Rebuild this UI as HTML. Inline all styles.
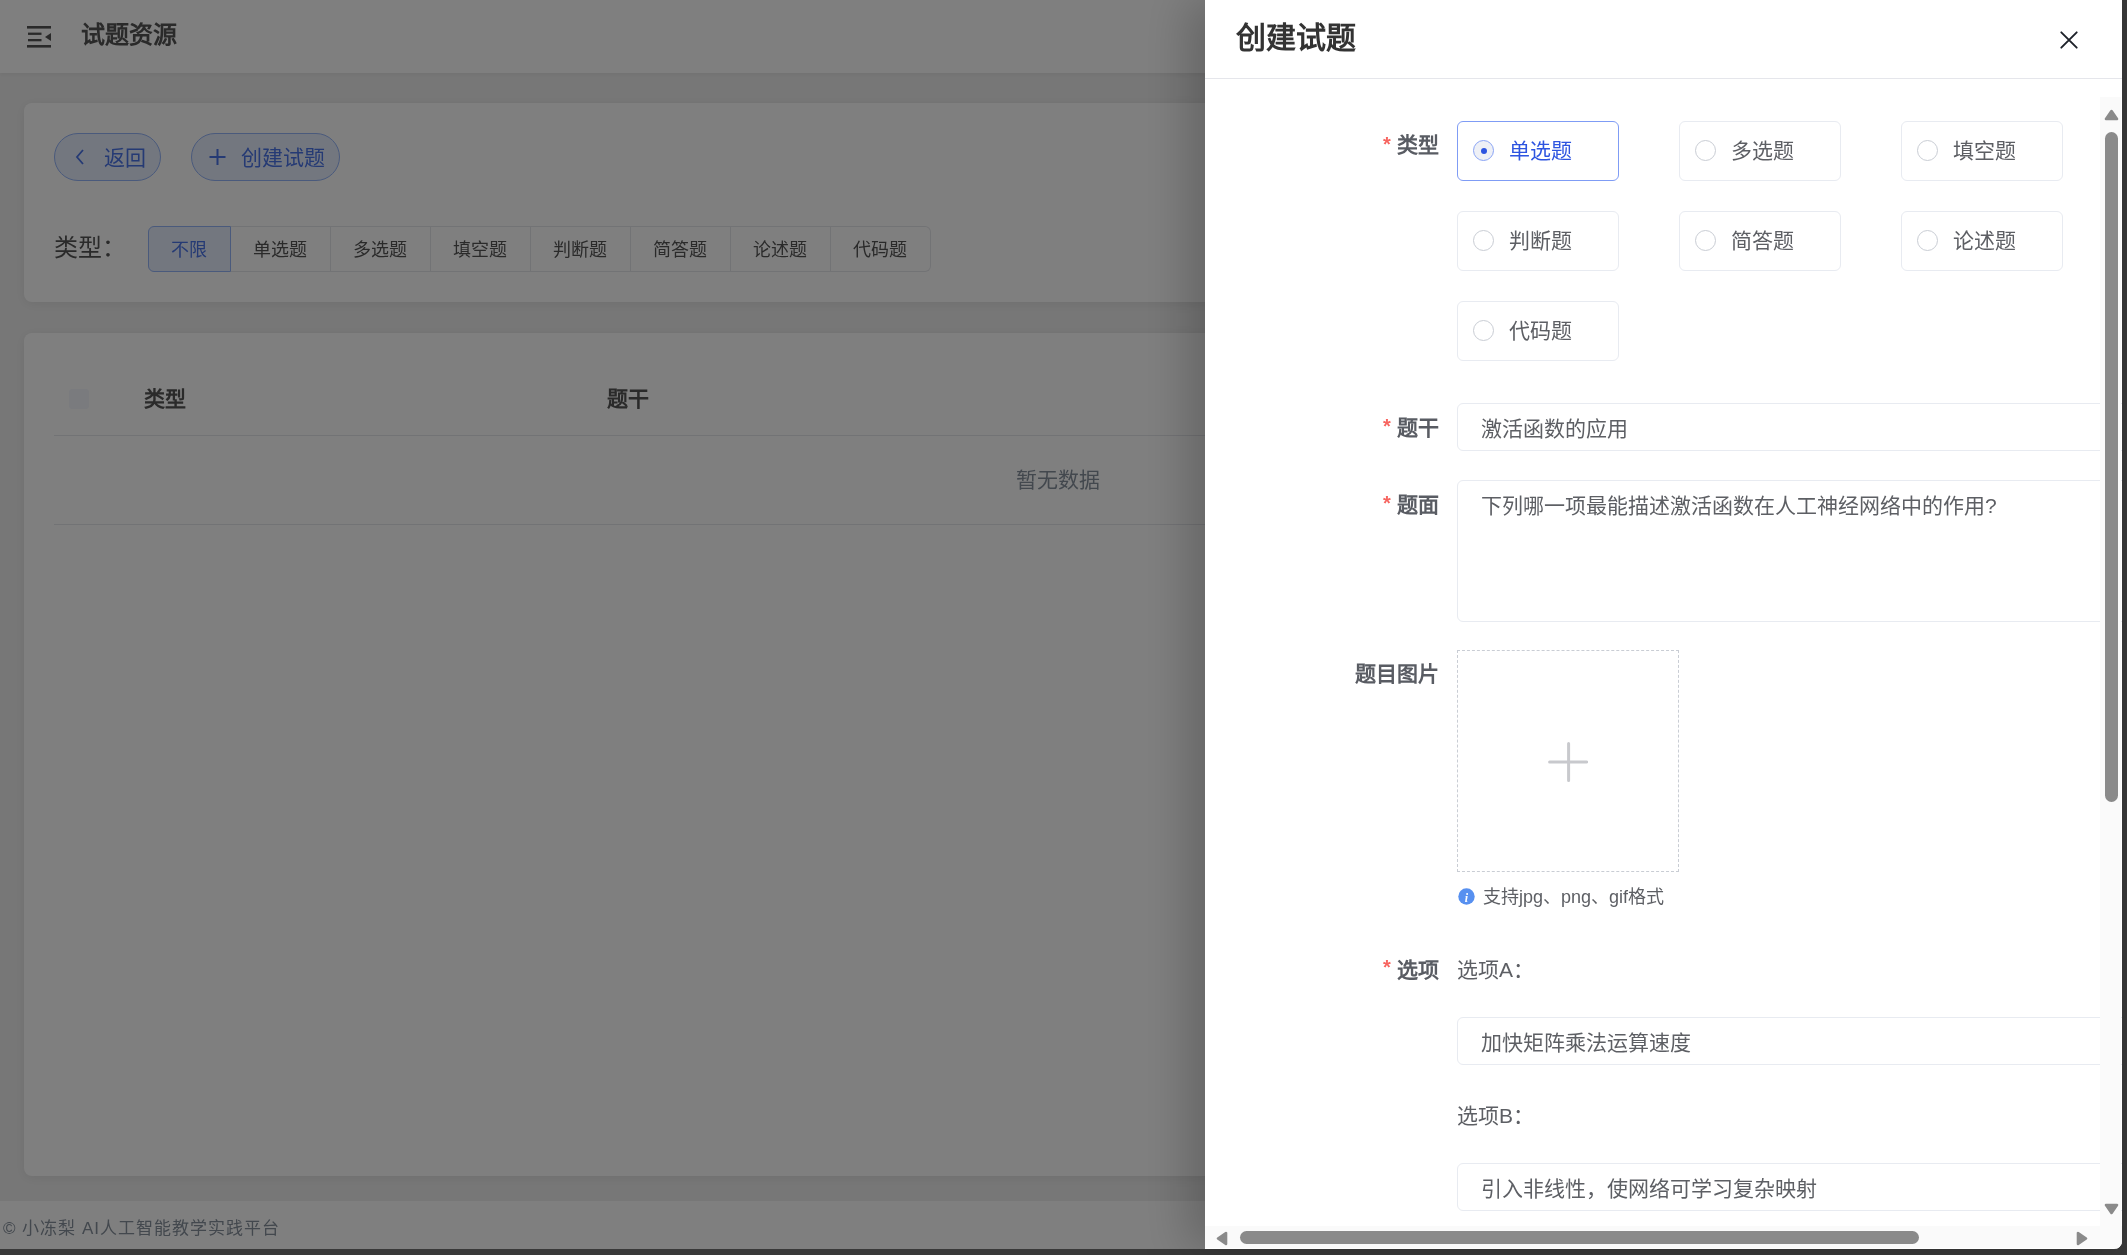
<!DOCTYPE html>
<html lang="zh-CN"><head><meta charset="utf-8">
<style>
*{box-sizing:border-box;margin:0;padding:0}
html,body{width:2127px;height:1255px;overflow:hidden;background:#393939;font-family:"Liberation Sans",sans-serif}
.abs{position:absolute}
#page{position:absolute;left:0;top:0;width:2122px;height:1249px;border-bottom-right-radius:8px;background:#efefef;overflow:hidden}
#hdr{left:0;top:0;width:2127px;height:73px;background:#fff;box-shadow:0 2px 4px rgba(0,0,0,.05)}
.card{background:#fff;border-radius:8px;box-shadow:0 2px 12px rgba(0,0,0,.07)}
.t{position:absolute;white-space:nowrap}
#mask{position:absolute;left:0;top:0;width:2122px;height:1249px;border-bottom-right-radius:8px;background:rgba(0,0,0,.5)}
#drawer{position:absolute;left:1205px;top:0;width:917px;height:1249px;background:#fff;border-bottom-right-radius:8px;box-shadow:-16px 0 48px rgba(0,0,0,.22);overflow:hidden}
.btn{position:absolute;height:48px;border-radius:24px;border:1px solid #94b4f8;background:#e6eeff}
.seg{position:absolute;top:226px;height:46px;border:1px solid #e5e6eb;border-left:none;width:100px}
.segt{font-size:18px;line-height:18px;color:#555;top:241px}
.lbl{font-weight:700;font-size:21px;line-height:21px;color:#595c63}
.req{color:#f76560;font-size:20px;line-height:20px;font-weight:700}
.rc{position:absolute;width:162px;height:60px;border:1px solid #e8ebf1;border-radius:6px}
.rc .ci{position:absolute;left:15px;top:18px;width:21px;height:21px;border-radius:50%;border:1px solid #c9cdd4;background:#fff}
.rc .tx{position:absolute;left:51px;top:18px;font-size:21px;line-height:21px;color:#5d5f64;white-space:nowrap}
.inp{position:absolute;left:252px;width:700px;border:1px solid #e8ebf1;border-radius:6px;background:#fff}
.it{font-size:21px;line-height:21px;color:#5d5f64}
.t,.rc .tx{will-change:opacity;opacity:0.999}
</style></head><body>
<div id="page">
  <div id="hdr" class="abs"></div>
  <!-- hamburger -->
  <svg class="abs" style="left:27px;top:26px" width="25" height="22" viewBox="0 0 25 22">
    <rect x="0" y="0" width="24" height="2.6" fill="#555"/>
    <rect x="1" y="6.6" width="13.5" height="2.3" fill="#555"/>
    <rect x="1" y="13" width="13.5" height="2.3" fill="#555"/>
    <rect x="0" y="19" width="24" height="2.6" fill="#555"/>
    <path d="M24 7 L18 11 L24 15 Z" fill="#555"/>
  </svg>
  <div class="t" style="left:81px;top:23px;font-weight:700;font-size:24px;line-height:24px;color:#555">试题资源</div>

  <div class="abs card" style="left:24px;top:103px;width:2079px;height:199px"></div>
  <div class="btn" style="left:54px;top:133px;width:107px"></div>
  <svg class="abs" style="left:74px;top:148px" width="12" height="18" viewBox="0 0 12 18"><path d="M9 2 L3 9 L9 16" fill="none" stroke="#4a74e8" stroke-width="1.8"/></svg>
  <div class="t" style="left:104px;top:147px;font-size:21px;line-height:21px;color:#4a74e8">返回</div>
  <div class="btn" style="left:191px;top:133px;width:149px"></div>
  <svg class="abs" style="left:208px;top:148px" width="19" height="18" viewBox="0 0 19 18"><path d="M9.5 1 V17 M1.5 9 H17.5" fill="none" stroke="#4a74e8" stroke-width="2"/></svg>
  <div class="t" style="left:241px;top:147px;font-size:21px;line-height:21px;color:#4a74e8">创建试题</div>

  <div class="t" style="left:54px;top:236px;font-size:24px;line-height:24px;color:#555">类型：</div>
  <div class="abs" style="left:148px;top:226px;width:83px;height:46px;border:1px solid #94b4f8;background:#e6eeff;border-radius:6px 0 0 6px"></div>
  <div class="seg" style="left:231px"></div>
  <div class="seg" style="left:331px"></div>
  <div class="seg" style="left:431px"></div>
  <div class="seg" style="left:531px"></div>
  <div class="seg" style="left:631px"></div>
  <div class="seg" style="left:731px"></div>
  <div class="seg" style="left:831px;border-radius:0 6px 6px 0"></div>
  <div class="t segt" style="left:171px;color:#4a74e8">不限</div>
  <div class="t segt" style="left:253px">单选题</div>
  <div class="t segt" style="left:353px">多选题</div>
  <div class="t segt" style="left:453px">填空题</div>
  <div class="t segt" style="left:553px">判断题</div>
  <div class="t segt" style="left:653px">简答题</div>
  <div class="t segt" style="left:753px">论述题</div>
  <div class="t segt" style="left:853px">代码题</div>

  <div class="abs card" style="left:24px;top:333px;width:2079px;height:843px"></div>
  <div class="abs" style="left:69px;top:389px;width:20px;height:20px;border-radius:3px;background:#f4f7fd"></div>
  <div class="t" style="left:144px;top:388px;font-weight:700;font-size:21px;line-height:21px;color:#555">类型</div>
  <div class="t" style="left:607px;top:388px;font-weight:700;font-size:21px;line-height:21px;color:#555">题干</div>
  <div class="abs" style="left:54px;top:435px;width:2049px;height:1px;background:#e5e6eb"></div>
  <div class="t" style="left:1016px;top:469px;font-size:21px;line-height:21px;color:#86909c">暂无数据</div>
  <div class="abs" style="left:54px;top:524px;width:2049px;height:1px;background:#e5e6eb"></div>

  <div class="abs" style="left:0;top:1201px;width:2127px;height:48px;background:#fff"></div>
  <div class="t" style="left:3px;top:1220px;font-size:17px;line-height:17px;letter-spacing:1px;color:#86909c">© 小冻梨 AI人工智能教学实践平台</div>
</div>
<div id="mask"></div>
<div id="drawer">
  <div class="t" style="left:31px;top:23px;font-weight:700;font-size:30px;line-height:30px;color:#333">创建试题</div>
  <svg class="abs" style="left:854px;top:30px" width="20" height="20" viewBox="0 0 20 20"><path d="M2.3 2.3 L17.7 17.7 M17.7 2.3 L2.3 17.7" stroke="#1d2129" stroke-width="1.9" stroke-linecap="round" fill="none"/></svg>
  <div class="abs" style="left:0;top:78px;width:917px;height:1px;background:#e5e6eb"></div>

  <!-- form -->
  <div class="t req" style="left:178px;top:134px">*</div>
  <div class="t lbl" style="left:192px;top:134px">类型</div>
  <div class="rc" style="left:252px;top:121px;border-color:#7f9cf5">
    <div class="ci" style="background:#eef0f6;border-color:#8aa4f5"></div>
    <div class="abs" style="left:23px;top:26px;width:6px;height:6px;border-radius:50%;background:#2d54e0"></div>
    <div class="tx" style="color:#2d54e0">单选题</div>
  </div>
  <div class="rc" style="left:474px;top:121px"><div class="ci"></div><div class="tx">多选题</div></div>
  <div class="rc" style="left:696px;top:121px"><div class="ci"></div><div class="tx">填空题</div></div>
  <div class="rc" style="left:252px;top:211px"><div class="ci"></div><div class="tx">判断题</div></div>
  <div class="rc" style="left:474px;top:211px"><div class="ci"></div><div class="tx">简答题</div></div>
  <div class="rc" style="left:696px;top:211px"><div class="ci"></div><div class="tx">论述题</div></div>
  <div class="rc" style="left:252px;top:301px"><div class="ci"></div><div class="tx">代码题</div></div>

  <div class="t req" style="left:178px;top:416px">*</div>
  <div class="t lbl" style="left:192px;top:417px">题干</div>
  <div class="inp" style="top:403px;height:48px"></div>
  <div class="t it" style="left:276px;top:418px">激活函数的应用</div>

  <div class="t req" style="left:178px;top:493px">*</div>
  <div class="t lbl" style="left:192px;top:494px">题面</div>
  <div class="inp" style="top:480px;height:142px"></div>
  <div class="t it" style="left:276px;top:495px">下列哪一项最能描述激活函数在人工神经网络中的作用?</div>

  <div class="t lbl" style="left:150px;top:663px">题目图片</div>
  <div class="abs" style="left:252px;top:650px;width:222px;height:222px;border:1px dashed #c9cdd4;background:#fff"></div>
  <svg class="abs" style="left:343px;top:742px" width="40" height="40" viewBox="0 0 40 40"><path d="M20.6 1.6 V38.4 M1.6 20 H38.6" stroke="#c8c9cd" stroke-width="3" stroke-linecap="round" fill="none"/></svg>
  <svg class="abs" style="left:253px;top:888px" width="17" height="17" viewBox="0 0 17 17"><circle cx="8.5" cy="8.5" r="8.2" fill="#5790f0"/><text x="8.5" y="13.5" text-anchor="middle" font-family="Liberation Serif" font-style="italic" font-weight="700" font-size="12" fill="#fff">i</text></svg>
  <div class="t" style="left:278px;top:888px;font-size:18px;line-height:18px;color:#5d5f64">支持jpg、png、gif格式</div>

  <div class="t req" style="left:178px;top:957px">*</div>
  <div class="t lbl" style="left:192px;top:959px">选项</div>
  <div class="t it" style="left:252px;top:959px">选项A：</div>
  <div class="inp" style="top:1017px;height:48px"></div>
  <div class="t it" style="left:276px;top:1032px">加快矩阵乘法运算速度</div>
  <div class="t it" style="left:252px;top:1105px">选项B：</div>
  <div class="inp" style="top:1163px;height:48px"></div>
  <div class="t it" style="left:276px;top:1178px">引入非线性，使网络可学习复杂映射</div>

  <!-- scrollbars -->
  <div class="abs" style="left:895px;top:97px;width:21px;height:1129px;background:#fafafa"></div>
  <svg class="abs" style="left:899px;top:109px" width="15" height="12" viewBox="0 0 15 12"><path d="M7.5 2 L13 10 L2 10 Z" fill="#8a8a8a" stroke="#8a8a8a" stroke-width="2.6" stroke-linejoin="round"/></svg>
  <div class="abs" style="left:900px;top:132px;width:13px;height:670px;border-radius:6.5px;background:#8a8a8a"></div>
  <svg class="abs" style="left:899px;top:1203px" width="15" height="12" viewBox="0 0 15 12"><path d="M7.5 10 L13 2 L2 2 Z" fill="#8a8a8a" stroke="#8a8a8a" stroke-width="2.6" stroke-linejoin="round"/></svg>
  <div class="abs" style="left:0;top:1226px;width:917px;height:22px;background:#fafafa"></div>
  <svg class="abs" style="left:11px;top:1231px" width="12" height="15" viewBox="0 0 12 15"><path d="M2 7.5 L10 2 L10 13 Z" fill="#8a8a8a" stroke="#8a8a8a" stroke-width="2.6" stroke-linejoin="round"/></svg>
  <div class="abs" style="left:35px;top:1231px;width:679px;height:13px;border-radius:6.5px;background:#8a8a8a"></div>
  <svg class="abs" style="left:871px;top:1231px" width="12" height="15" viewBox="0 0 12 15"><path d="M10 7.5 L2 2 L2 13 Z" fill="#8a8a8a" stroke="#8a8a8a" stroke-width="2.6" stroke-linejoin="round"/></svg>
</div>
</body></html>
